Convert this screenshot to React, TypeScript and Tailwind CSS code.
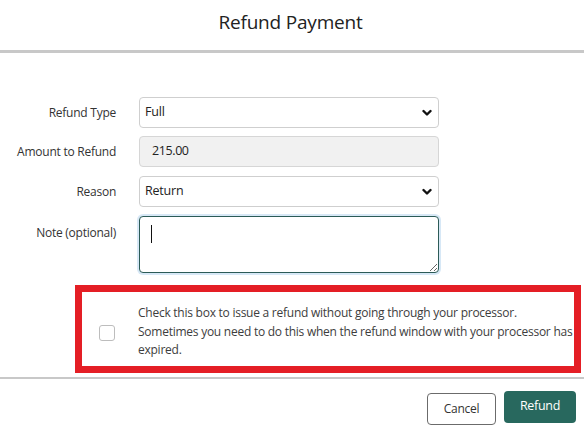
import React from "react";

function Chevron() {
  return (
    <svg width="10" height="8" viewBox="0 0 10 8" className="absolute right-[6px] top-1/2 -translate-y-1/2 pointer-events-none">
      <polyline points="1.5,2 5,5.5 8.5,2" fill="none" stroke="#111" strokeWidth="2.4" strokeLinecap="round" strokeLinejoin="round" />
    </svg>
  );
}

function SelectBox({ value }: { value: string }) {
  return (
    <div className="relative w-[300px] h-[31px] border border-[#cfcfcf] rounded-[4px] bg-white flex items-center pl-[5px] text-[12.5px] tracking-[-0.2px] text-[#222]">
      <span>{value}</span>
      <Chevron />
    </div>
  );
}

function Row({ label, children, className = "", top = false }: { label: string; children: React.ReactNode; className?: string; top?: boolean }) {
  return (
    <div className={`flex ${top ? "items-start" : "items-center"} ${className}`}>
      <div className={`w-[116px] text-right text-[12px] tracking-[-0.25px] text-[#333] ${top ? "pt-[8px]" : ""}`}>{label}</div>
      <div className="ml-[23px]">{children}</div>
    </div>
  );
}

export default function App() {
  return (
    <div className="w-[584px] h-[426px] bg-white overflow-hidden" style={{ fontFamily: '"Open Sans", "Noto Sans", sans-serif' }}>
      <div className="h-[53px] flex items-center justify-center text-[19px] tracking-[-0.2px] text-[#222] border-b-[3px] border-[#c8c8c8] pb-[5px] pr-[3px]">
        Refund Payment
      </div>
      <div className="pt-[44px]">
        <Row label="Refund Type">
          <SelectBox value="Full" />
        </Row>
        <Row label="Amount to Refund" className="mt-[8px]">
          <div className="w-[300px] h-[31px] border border-[#d6d6d6] rounded-[4px] bg-[#f1f1f1] flex items-center pl-[12px] text-[12.5px] tracking-[-0.4px] text-[#222]">
            215.00
          </div>
        </Row>
        <Row label="Reason" className="mt-[9px]">
          <SelectBox value="Return" />
        </Row>
        <Row label="Note (optional)" className="mt-[9px]" top>
          <div className="relative w-[300px] h-[57px]">
            <textarea
              readOnly
              className="w-full h-full border border-[#2c5b57] rounded-[4px] bg-white shadow-[0_0_0_2px_rgba(140,190,230,0.35)] outline-none block"
            />
            <div className="absolute left-[12px] top-[9px] w-[1px] h-[18px] bg-[#111]" />
          </div>
        </Row>
      </div>
      <div className="mt-[12px] ml-[75px] w-[506px] h-[88px] border-[7px] border-[#e41e25] flex items-start">
        <div className="mt-[33px] ml-[17px] w-[16px] h-[16px] border border-[#bdbdbd] rounded-[3px] bg-white shrink-0" />
        <div className="mt-[12px] ml-[23px] text-[12px] tracking-[-0.25px] leading-[18.5px] text-[#3d3d3d] whitespace-nowrap">
          <div>Check this box to issue a refund without going through your processor.</div>
          <div>Sometimes you need to do this when the refund window with your processor has</div>
          <div>expired.</div>
        </div>
      </div>
      <div className="mt-[4px] border-t-[2px] border-[#c8c8c8] flex justify-end items-start pr-[8px] pt-[12px] gap-[8px]">
        <button className="mt-[2px] w-[69px] h-[32px] border border-[#6b6b6b] rounded-[4px] bg-white text-[12px] tracking-[-0.3px] text-[#333]">
          Cancel
        </button>
        <button className="w-[72px] h-[32px] rounded-[4px] bg-[#28685e] text-[12.5px] tracking-[-0.3px] text-white font-medium pb-[2px]">
          Refund
        </button>
      </div>
    </div>
  );
}
